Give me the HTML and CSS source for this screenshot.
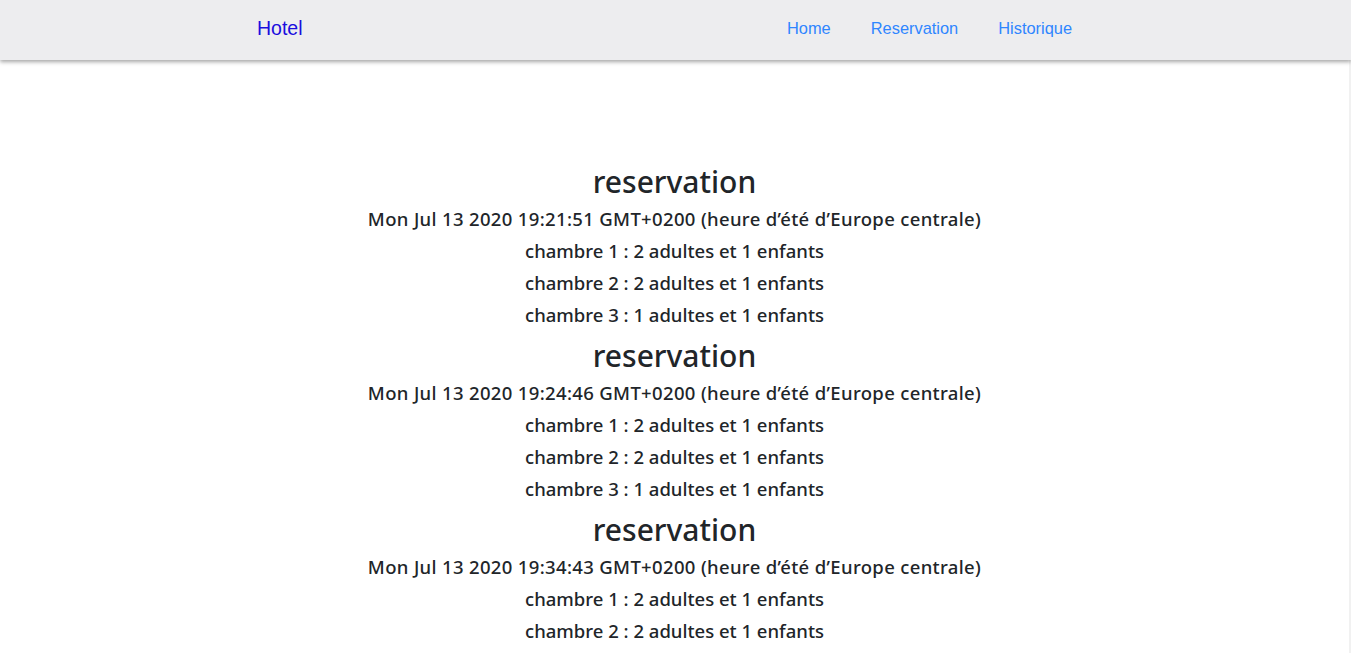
FILE: index.html
```html
<!DOCTYPE html>
<html>
<head>
<meta charset="utf-8">
<link rel="stylesheet" href="styles.css">
</head>
<body>
<nav class="navbar">
  <a class="brand" href="#">Hotel</a>
  <div class="links">
    <a href="#">Home</a>
    <a href="#">Reservation</a>
    <a href="#">Historique</a>
  </div>
</nav>
<main class="content">
  <section class="resa">
    <h3>reservation</h3>
    <h5 class="date">Mon Jul 13 2020 19:21:51 GMT+0200 (heure d’été d’Europe centrale)</h5>
    <h5>chambre 1 : 2 adultes et 1 enfants</h5>
    <h5>chambre 2 : 2 adultes et 1 enfants</h5>
    <h5>chambre 3 : 1 adultes et 1 enfants</h5>
  </section>
  <section class="resa">
    <h3>reservation</h3>
    <h5 class="date">Mon Jul 13 2020 19:24:46 GMT+0200 (heure d’été d’Europe centrale)</h5>
    <h5>chambre 1 : 2 adultes et 1 enfants</h5>
    <h5>chambre 2 : 2 adultes et 1 enfants</h5>
    <h5>chambre 3 : 1 adultes et 1 enfants</h5>
  </section>
  <section class="resa">
    <h3>reservation</h3>
    <h5 class="date">Mon Jul 13 2020 19:34:43 GMT+0200 (heure d’été d’Europe centrale)</h5>
    <h5>chambre 1 : 2 adultes et 1 enfants</h5>
    <h5>chambre 2 : 2 adultes et 1 enfants</h5>
    <h5>chambre 3 : 1 adultes et 1 enfants</h5>
  </section>
</main>
</body>
</html>
```
FILE: styles.css
```css
html, body {
  margin: 0;
  padding: 0;
  overflow: hidden;
}
body {
  font-family: "Noto Sans", "Open Sans", sans-serif;
  color: #212529;
  background: #fff;
}
.navbar {
  position: relative;
  z-index: 2;
  height: 60px;
  background: #ededef;
  box-shadow: 0 2px 4px rgba(0, 0, 0, 0.35);
  display: flex;
  align-items: center;
  justify-content: space-between;
  padding: 0 259px 4px 257px;
  box-sizing: border-box;
  font-family: "Liberation Sans", Arial, sans-serif;
}
.brand {
  color: #1a0dde;
  text-decoration: none;
  font-size: 19.5px;
  margin-top: 1px;
}
.links {
  display: flex;
}
.links a {
  color: #2f86ff;
  text-decoration: none;
  font-size: 16.4px;
  padding: 0 20px;
}
.content {
  padding-top: 104px;
  text-align: center;
  border-right: 2px solid #f1f1f1;
  min-height: 600px;
}
.resa {
  padding-bottom: 3px;
}
h3 {
  margin: 0 0 8px;
  font-size: 30px;
  font-weight: 500;
  line-height: 35px;
}
h5 {
  margin: 0 0 8px;
  font-size: 18.5px;
  font-weight: 500;
  line-height: 24px;
}
h5.date {
  letter-spacing: 0.34px;
}
```
